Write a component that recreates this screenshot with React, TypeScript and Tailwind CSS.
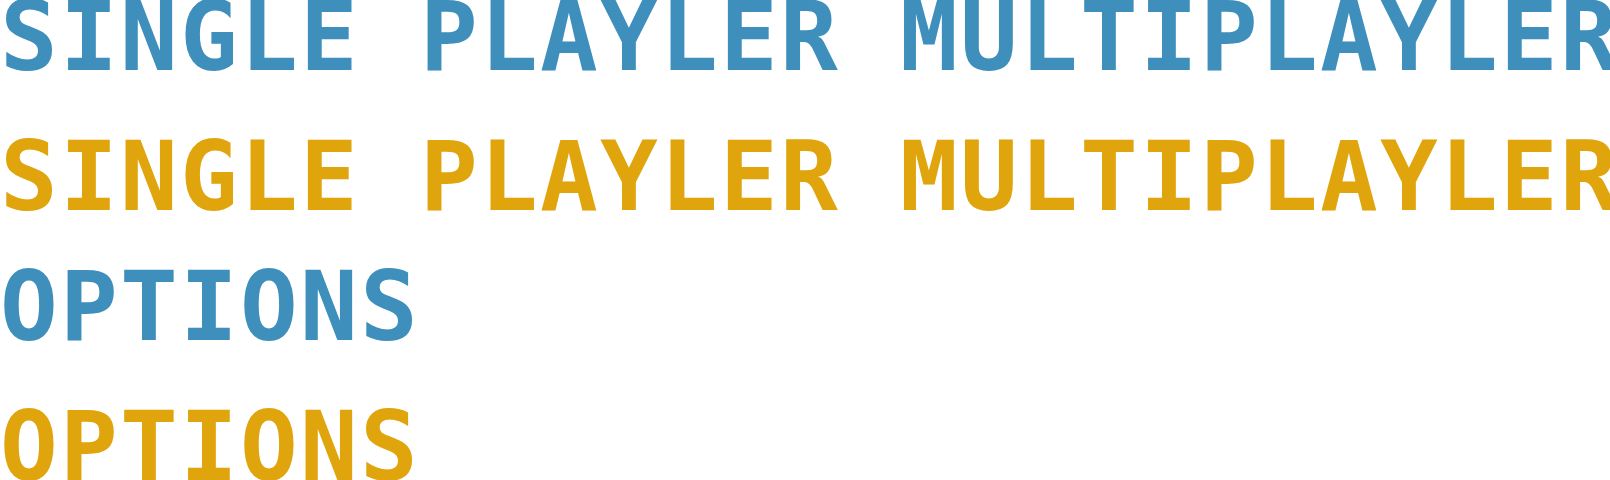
const items = [
  { label: 'SINGLE PLAYLER MULTIPLAYLER', active: false, gap: 'mt-0' },
  { label: 'SINGLE PLAYLER MULTIPLAYLER', active: true, gap: 'mt-[70px]' },
  { label: 'OPTIONS', active: false, gap: 'mt-[60px]' },
  { label: 'OPTIONS', active: true, gap: 'mt-[70px]' },
];

const MenuLabel = ({ label, active, gap }: { label: string; active: boolean; gap: string }) => (
  <div
    className={`${gap} h-[70px] whitespace-nowrap font-['DejaVu_Sans_Mono',monospace] font-bold text-[96px] leading-[74px] tracking-[2.2px] ${
      active ? 'text-[#e0a40c]' : 'text-[#3e8fbb]'
    }`}
  >
    {label}
  </div>
);

export default function App() {
  return (
    <div className="flex h-[480px] w-full flex-col overflow-hidden bg-white">
      {items.map((item, i) => (
        <MenuLabel key={i} {...item} />
      ))}
    </div>
  );
}
